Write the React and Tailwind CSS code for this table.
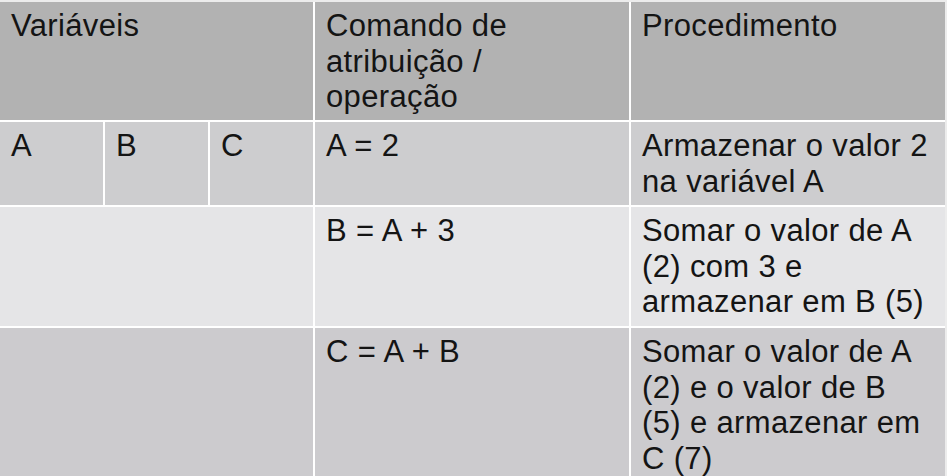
import React from 'react';

const rows = [
  {
    bg: 'bg-[#cdcdcf]',
    vars: ['A', 'B', 'C'],
    cmd: ['A = 2'],
    proc: ['Armazenar o valor 2', 'na variável A'],
  },
  {
    bg: 'bg-[#e5e5e7]',
    vars: null,
    cmd: ['B = A + 3'],
    proc: ['Somar o valor de A', '(2) com 3 e', 'armazenar em B (5)'],
  },
  {
    bg: 'bg-[#cccbce]',
    vars: null,
    cmd: ['C = A + B'],
    proc: ['Somar o valor de A', '(2) e o valor de B', '(5) e armazenar em', 'C (7)'],
  },
];

function Lines({ lines }) {
  return (
    <>
      {lines.map((l, i) => (
        <div key={i} className="whitespace-nowrap">
          {l}
        </div>
      ))}
    </>
  );
}

function App() {
  const cell = 'pl-[11px] pt-[6px]';

  return (
    <div className="h-[476px] w-[947px] overflow-hidden bg-[#ececec] pt-[2px] font-['Liberation_Sans',Arial,sans-serif] text-[31px] leading-[35.5px] tracking-[0.35px] text-[#141414]">
      <div className="grid w-[945px] grid-cols-[103px_103px_103px_314px_314px] grid-rows-[118px_83px_119px_170px] gap-[2px] bg-white">
        <div className={`col-span-3 bg-[#b2b2b2] ${cell}`}>Variáveis</div>
        <div className={`bg-[#b2b2b2] ${cell}`}>
          <Lines lines={['Comando de', 'atribuição /', 'operação']} />
        </div>
        <div className={`bg-[#b2b2b2] ${cell}`}>Procedimento</div>

        {rows.map((row, i) => (
          <React.Fragment key={i}>
            {row.vars ? (
              row.vars.map((v) => (
                <div key={v} className={`${row.bg} ${cell}`}>
                  {v}
                </div>
              ))
            ) : (
              <div className={`col-span-3 ${row.bg}`}></div>
            )}
            <div className={`${row.bg} ${cell}`}>
              <Lines lines={row.cmd} />
            </div>
            <div className={`${row.bg} ${cell}`}>
              <Lines lines={row.proc} />
            </div>
          </React.Fragment>
        ))}
      </div>
    </div>
  );
}

export default App;
